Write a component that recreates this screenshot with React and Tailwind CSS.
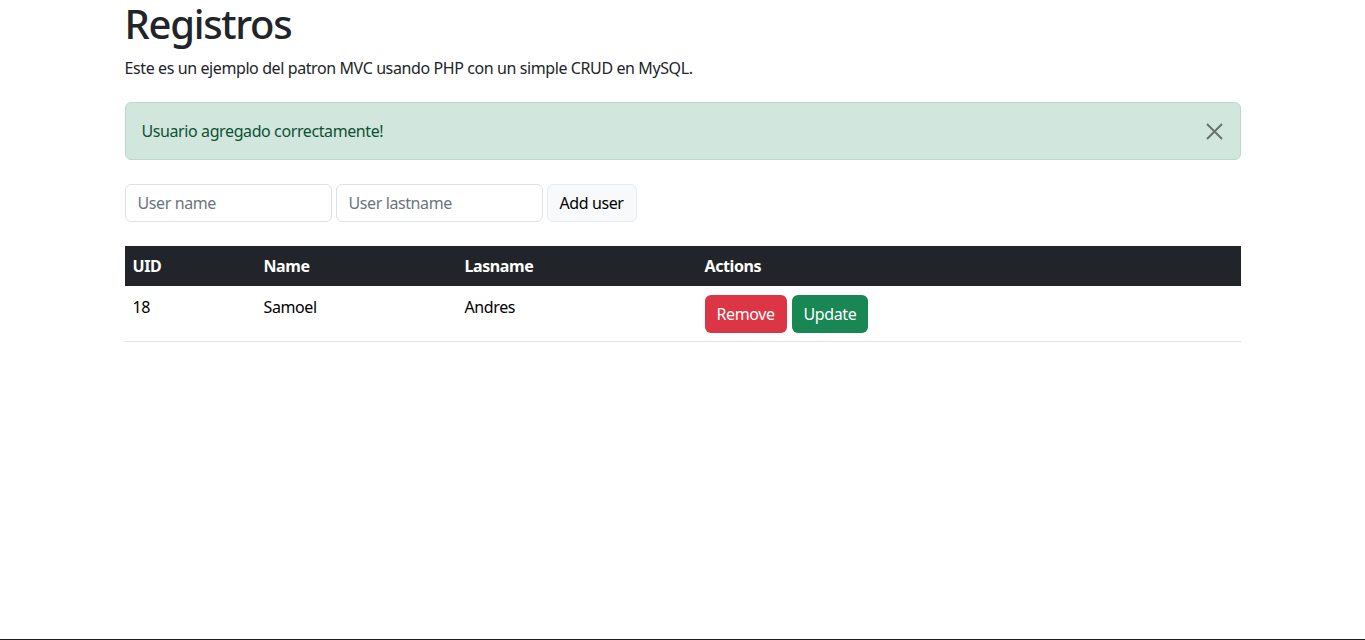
import React, { useState } from 'react';

const users = [{ uid: 18, name: 'Samoel', lastname: 'Andres' }];

const App = () => {
  const [showAlert, setShowAlert] = useState(true);

  return (
    <div className="min-h-[640px] flex flex-col bg-white text-[#212529] font-['Segoe_UI','Noto_Sans',sans-serif] text-base leading-6 tracking-[-0.4px]">
      <div className="flex-1 w-[1116px] mx-auto">
        <h1 className="text-[40px] leading-[48px] font-medium tracking-[-1.3px] mb-2">Registros</h1>
        <p className="mb-[22px]">Este es un ejemplo del patron MVC usando PHP con un simple CRUD en MySQL.</p>

        {showAlert && (
          <div className="flex items-center justify-between h-[58px] pl-4 pr-4 rounded-md border border-[#badbcc] bg-[#d1e7dd] text-[#0f5132]">
            <span>Usuario agregado correctamente!</span>
            <button onClick={() => setShowAlert(false)} className="w-[18px] h-[18px] flex items-center justify-center opacity-50">
              <svg width="17" height="17" viewBox="0 0 17 17" fill="none" stroke="#000" strokeWidth="2">
                <path d="M1 1L16 16M16 1L1 16" />
              </svg>
            </button>
          </div>
        )}

        <form className="flex gap-1 mt-6 mb-6" onSubmit={(e) => e.preventDefault()}>
          <input
            type="text"
            placeholder="User name"
            className="w-[207px] h-[38px] px-3 rounded-md border border-[#dee2e6] placeholder:text-[#6c757d] focus:outline-none"
          />
          <input
            type="text"
            placeholder="User lastname"
            className="w-[207px] h-[38px] px-3 rounded-md border border-[#dee2e6] placeholder:text-[#6c757d] focus:outline-none"
          />
          <button className="h-[38px] px-3 rounded-md border border-[#e9ecef] bg-[#f8f9fa] text-black">Add user</button>
        </form>

        <table className="w-full border-collapse text-left">
          <thead>
            <tr className="bg-[#212529] text-white h-10">
              <th className="w-[131px] px-2 font-bold">UID</th>
              <th className="w-[201px] px-2 font-bold">Name</th>
              <th className="w-[240px] px-2 font-bold">Lasname</th>
              <th className="px-2 font-bold">Actions</th>
            </tr>
          </thead>
          <tbody>
            {users.map((u) => (
              <tr key={u.uid} className="border-b border-[#dee2e6] align-top">
                <td className="px-2 pt-[9px] pb-[22px] text-black">{u.uid}</td>
                <td className="px-2 pt-[9px] text-black">{u.name}</td>
                <td className="px-2 pt-[9px] text-black">{u.lastname}</td>
                <td className="px-2 pt-[9px]">
                  <div className="flex gap-[5px]">
                    <button className="h-[38px] px-3 rounded-md bg-[#dc3545] text-white">Remove</button>
                    <button className="h-[38px] px-3 rounded-md bg-[#198754] text-white">Update</button>
                  </div>
                </td>
              </tr>
            ))}
          </tbody>
        </table>
      </div>
      <div className="h-px bg-[#1f1f1f]" />
    </div>
  );
};

export default App;
